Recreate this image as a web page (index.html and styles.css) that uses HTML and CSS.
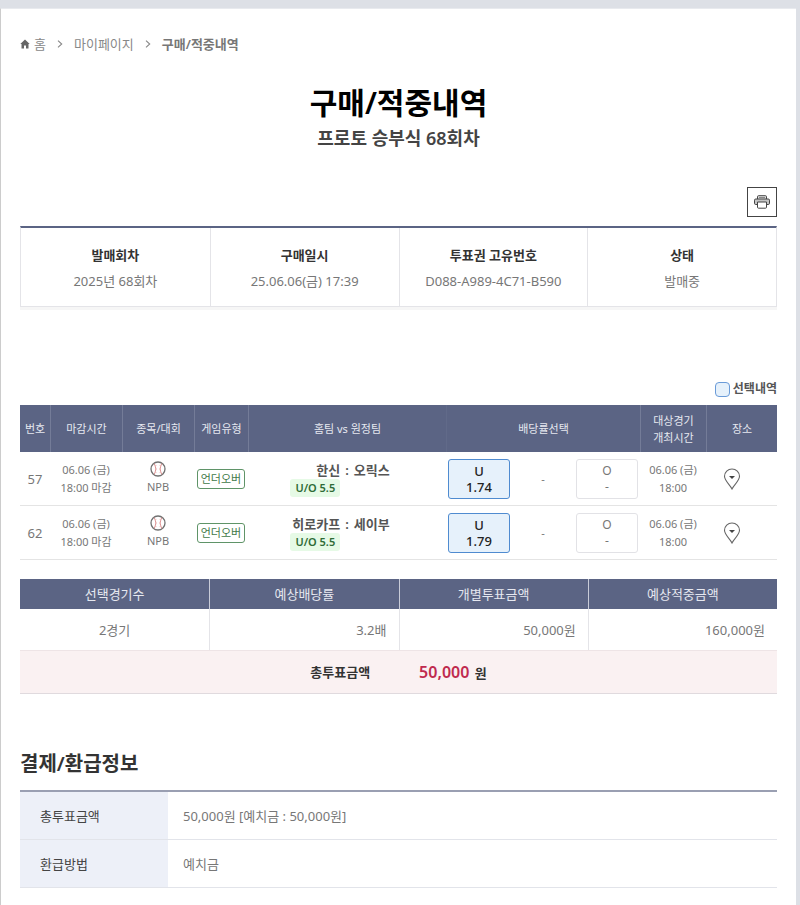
FILE: index.html
```html
<!DOCTYPE html>
<html lang="ko">
<head>
	<meta charset="UTF-8">
	<meta name="viewport" content="width=device-width, initial-scale=1.0">
	<title>구매/적중내역</title>
	<link rel="stylesheet" href="styles.css">
</head>
<body>
	<!-- 반복해서 쓰는 아이콘 -->
	<svg class="sprite" aria-hidden="true">
		<symbol id="icon-ball" viewBox="0 0 16 16">
			<circle cx="8" cy="8" r="7" fill="#fff" stroke="#707070" stroke-width="1.3"/>
			<path d="M4.2 2.6Q7.4 8 4.2 13.4M11.8 2.6Q8.6 8 11.8 13.4" fill="none" stroke="#dc8f8f" stroke-width="1"/>
			<path d="M4.6 5.2l1.9-.8M5 8h2M4.6 10.8l1.9.8M11.4 5.2l-1.9-.8M11 8H9M11.4 10.8l-1.9.8" fill="none" stroke="#ecb6b6" stroke-width=".8"/>
		</symbol>
		<symbol id="icon-pin" viewBox="0 0 18 22">
			<path d="M9 21C7 17 1.500 12.600 1.500 8.300a7.500 7.300 0 0 1 15 0C16.500 12.600 11 17 9 21z" fill="#fff" stroke="#666" stroke-width="1.100"/>
			<path d="M6 8h6l-3 3z" fill="#444"/>
		</symbol>
		<symbol id="icon-arrow" viewBox="0 0 6 8">
			<path d="M1 .7L4.700 4 1 7.300" fill="none" stroke="#888" stroke-width="1.1"/>
		</symbol>
	</svg>

	<main class="page">
		<nav class="breadcrumb" aria-label="현재 위치">
			<a href="#" class="home">
				<svg width="10" height="10" viewBox="0 0 10 10" aria-hidden="true">
					<path d="M5 .5L.3 5h1.200v4.500h2.500V6.500h2v3h2.500V5h1.200z" fill="#666"/>
				</svg>
				홈
			</a>
			<svg width="6" height="8" aria-hidden="true"><use href="#icon-arrow"/></svg>
			<a href="#">마이페이지</a>
			<svg class="last-arrow" width="6" height="8" aria-hidden="true"><use href="#icon-arrow"/></svg>
			<a href="#" class="current" aria-current="page">구매/적중내역</a>
		</nav>

		<header class="page-title">
			<h1>구매/적중내역</h1>
			<p>프로토 승부식 68회차</p>
		</header>

		<div class="tools">
			<button type="button" class="btn-print" aria-label="인쇄">
				<svg width="16" height="14" viewBox="0 0 16 14" fill="none" stroke="#444" aria-hidden="true">
					<path d="M3.500 4V1.700q0-1 1-1h7q1 0 1 1V4" fill="#ddd"/>
					<rect x=".5" y="4" width="15" height="5.500" rx="1.200" fill="#c4c4c4"/>
					<path d="M5 2.500h6" stroke="#888"/>
					<path d="M3.500 7h9v5.200q0 1-1 1h-7q-1 0-1-1z" fill="#fff"/>
				</svg>
			</button>
		</div>

		<!-- 구매 정보 -->
		<dl class="info">
			<div class="info-item">
				<dt>발매회차</dt>
				<dd>2025년 68회차</dd>
			</div>
			<div class="info-item">
				<dt>구매일시</dt>
				<dd>25.06.06(금) 17:39</dd>
			</div>
			<div class="info-item">
				<dt>투표권 고유번호</dt>
				<dd>D088-A989-4C71-B590</dd>
			</div>
			<div class="info-item">
				<dt>상태</dt>
				<dd>발매중</dd>
			</div>
		</dl>

		<p class="legend"><span class="swatch"></span>선택내역</p>

		<!-- 선택한 경기 -->
		<table class="games">
			<colgroup>
				<col class="col-no">
				<col class="col-close">
				<col class="col-sport">
				<col class="col-type">
				<col>
				<col class="col-odds">
				<col class="col-date">
				<col class="col-place">
			</colgroup>
			<thead>
				<tr>
					<th>번호</th>
					<th>마감시간</th>
					<th>종목/대회</th>
					<th>게임유형</th>
					<th>홈팀 vs 원정팀</th>
					<th class="odds-head">배당률선택</th>
					<th>대상경기<br>개최시간</th>
					<th>장소</th>
				</tr>
			</thead>
			<tbody>
				<tr>
					<td class="no">57</td>
					<td>06.06 (금)<br>18:00 마감</td>
					<td>
						<svg class="ball" width="16" height="16" aria-hidden="true"><use href="#icon-ball"/></svg>
						NPB
					</td>
					<td><span class="type">언더오버</span></td>
					<td>
						<div class="match">
							<div class="team-home">한신<span class="line">U/O 5.5</span></div>
							<span>:</span>
							<div class="team-away">오릭스</div>
						</div>
					</td>
					<td>
						<div class="odds">
							<button type="button" class="odd selected">U<br>1.74</button>
							<span>-</span>
							<button type="button" class="odd">O<br>-</button>
						</div>
					</td>
					<td>06.06 (금)<br>18:00</td>
					<td class="place">
						<button type="button" class="btn-place" aria-label="장소 보기">
							<svg width="18" height="22" aria-hidden="true"><use href="#icon-pin"/></svg>
						</button>
					</td>
				</tr>
				<tr>
					<td class="no">62</td>
					<td>06.06 (금)<br>18:00 마감</td>
					<td>
						<svg class="ball" width="16" height="16" aria-hidden="true"><use href="#icon-ball"/></svg>
						NPB
					</td>
					<td><span class="type">언더오버</span></td>
					<td>
						<div class="match">
							<div class="team-home">히로카프<span class="line">U/O 5.5</span></div>
							<span>:</span>
							<div class="team-away">세이부</div>
						</div>
					</td>
					<td>
						<div class="odds">
							<button type="button" class="odd selected">U<br>1.79</button>
							<span>-</span>
							<button type="button" class="odd">O<br>-</button>
						</div>
					</td>
					<td>06.06 (금)<br>18:00</td>
					<td class="place">
						<button type="button" class="btn-place" aria-label="장소 보기">
							<svg width="18" height="22" aria-hidden="true"><use href="#icon-pin"/></svg>
						</button>
					</td>
				</tr>
			</tbody>
		</table>

		<!-- 합계 -->
		<table class="summary">
			<thead>
				<tr>
					<th>선택경기수</th>
					<th>예상배당률</th>
					<th>개별투표금액</th>
					<th>예상적중금액</th>
				</tr>
			</thead>
			<tbody>
				<tr>
					<td class="count">2경기</td>
					<td>3.2배</td>
					<td>50,000원</td>
					<td>160,000원</td>
				</tr>
			</tbody>
			<tfoot>
				<tr>
					<td colspan="4">
						<div class="total">
							<span>총투표금액</span>
							<span><strong>50,000</strong> 원</span>
						</div>
					</td>
				</tr>
			</tfoot>
		</table>

		<h2>결제/환급정보</h2>
		<table class="payment">
			<tr>
				<th scope="row">총투표금액</th>
				<td>50,000원 [예치금 : 50,000원]</td>
			</tr>
			<tr>
				<th scope="row">환급방법</th>
				<td>예치금</td>
			</tr>
		</table>
	</main>
</body>
</html>
```

FILE: styles.css
```css
*{
	box-sizing: border-box;
}
body{
	margin: 0;
	padding: 8px 4px 0 0;
	background-color: #dde0e6;
	color: #777;
	font-family: "Noto Sans", "Noto Sans CJK KR", sans-serif;
	font-size: 13px;
	line-height: 20px;
}
h1, h2, p, dl, dd{
	margin: 0;
}
button{
	font-family: inherit;
	cursor: pointer;
}
table{
	width: 100%;
	border-spacing: 0;
	table-layout: fixed;
}
th, td{
	padding: 0;
}
.sprite{
	display: none;
}
.page{
	min-height: calc(100vh - 8px);
	padding: 25px 19px 16px;
	border-left: 1px solid #ccc;
	border-top: 1px solid #e8eaee;
	background-color: #fff;
}

/* 현재 위치 */
.breadcrumb{
	display: flex;
	align-items: center;
	gap: 11px;
}
.breadcrumb a{
	color: #888;
	text-decoration: none;
}
.breadcrumb .home{
	display: flex;
	align-items: center;
	gap: 4px;
}
.breadcrumb .current{
	color: #777;
	font-weight: 600;
}

/* 제목 */
.page-title{
	margin-top: 29px;
	text-align: center;
}
.page-title h1{
	color: #000;
	font-size: 30px;
	line-height: 40px;
	font-weight: 600;
}
.page-title p{
	color: #444;
	font-size: 18px;
	line-height: 30px;
	font-weight: 600;
}
.tools{
	display: flex;
	justify-content: flex-end;
	margin: 34px 0 9px;
}
.btn-print{
	display: flex;
	align-items: center;
	justify-content: center;
	width: 30px;
	height: 30px;
	padding: 0;
	border: 1px solid #444;
	background-color: #fff;
}

/* 구매 정보 */
.info{
	display: grid;
	grid-template-columns: repeat(4, 1fr);
	border: 1px solid #e4e4e8;
	border-top: 2px solid #5b6484;
	box-shadow: 0 3px 0 #f6f6f6;
	text-align: center;
}
.info-item{
	padding: 14px 0 11px;
}
.info-item + .info-item{
	border-left: 1px solid #e4e4e8;
}
.info dt{
	color: #333;
	line-height: 26px;
	font-weight: 600;
}
.info dd{
	line-height: 27px;
}

.legend{
	display: flex;
	align-items: center;
	justify-content: flex-end;
	gap: 3px;
	margin-top: 72px;
	margin-bottom: 6px;
	color: #555;
	font-size: 12px;
	font-weight: 600;
}
.swatch{
	width: 15px;
	height: 15px;
	border: 1px solid #6a9bd8;
	border-radius: 4px;
	background-color: #e6f1fb;
}

/* 선택한 경기 */
.games{
	font-size: 11px;
	line-height: 18px;
	text-align: center;
}
.col-no{ width: 30px; }
.col-close, .col-sport{ width: 72px; }
.col-type{ width: 54px; }
.col-odds{ width: 194px; }
.col-date{ width: 66px; }
.col-place{ width: 71px; }
.games th{
	height: 47px;
	line-height: 17px;
	background-color: #5b6484;
	color: #e6e8f0;
	font-weight: 400;
}
.games th + th{
	border-left: 1px solid #747c98;
}
.games .odds-head{
	border-left-color: #616a89;
}
.games td{
	height: 54px;
	border-bottom: 1px solid #e4e4e4;
}
.games .no{
	font-size: 13px;
}
.ball{
	display: block;
	margin: 0 auto 1px;
}
.type{
	display: inline-block;
	padding: 0 3px;
	border: 1px solid #5f9468;
	border-radius: 3px;
	color: #3f7a49;
}
.match{
	display: grid;
	grid-template-columns: 1fr auto 1fr;
	gap: 5px;
	color: #555;
	font-size: 13px;
	font-weight: 600;
}
.team-home{
	text-align: right;
}
.team-away{
	text-align: left;
}
.line{
	display: block;
	width: fit-content;
	margin-left: auto;
	padding: 0 5px;
	border-radius: 3px;
	background-color: #e6fae6;
	color: #2f6b36;
	font-size: 11px;
	font-weight: 600;
}
.odds{
	display: flex;
	align-items: center;
	justify-content: space-between;
	padding: 0 2px;
}
.odd{
	width: 62px;
	height: 40px;
	padding: 0;
	border: 1px solid #e2e2e6;
	border-radius: 3px;
	background-color: #fff;
	color: #777;
	font-size: 12px;
	line-height: 16px;
}
.odd.selected{
	border-color: #4f8bd0;
	background-color: #e6f1fb;
	color: #222;
	font-size: 13px;
	font-weight: 500;
}
.btn-place{
	display: block;
	margin: 0 auto;
	padding: 0;
	border: 0;
	background: none;
}
.btn-place svg{
	display: block;
}
.games .place{
	padding-right: 20px;
}

/* 합계 */
.summary{
	margin-top: 19px;
}
.summary th{
	height: 30px;
	background-color: #5b6484;
	color: #e6e8f0;
	font-weight: 400;
}
.summary th + th{
	border-left: 1px solid #c9ccd8;
}
.summary tbody td{
	height: 41px;
	padding-right: 12px;
	text-align: right;
}
.summary tbody td + td{
	border-left: 1px solid #e4e4e8;
}
.summary tbody .count{
	padding-right: 0;
	text-align: center;
}
.summary tfoot td{
	height: 44px;
	border-top: 1px solid #eee4e6;
	border-bottom: 1px solid #e0dade;
	background-color: #faf1f2;
}
.total{
	display: flex;
	align-items: center;
	justify-content: center;
	gap: 49px;
	color: #333;
	font-weight: 600;
}
.total strong{
	margin-right: 2px;
	color: #c02a4e;
	font-size: 16px;
	font-weight: 600;
}

/* 결제/환급정보 */
h2{
	margin-top: 55px;
	color: #333;
	font-size: 20px;
	line-height: 30px;
	font-weight: 600;
}
.payment{
	margin-top: 11px;
	border-top: 2px solid #9a9fb2;
}
.payment th, .payment td{
	height: 48px;
	border-bottom: 1px solid #e2e4ea;
	text-align: left;
}
.payment th{
	width: 148px;
	padding-left: 20px;
	background-color: #edf0f8;
	color: #444;
	font-weight: 400;
}
.payment td{
	padding-left: 15px;
}
```
